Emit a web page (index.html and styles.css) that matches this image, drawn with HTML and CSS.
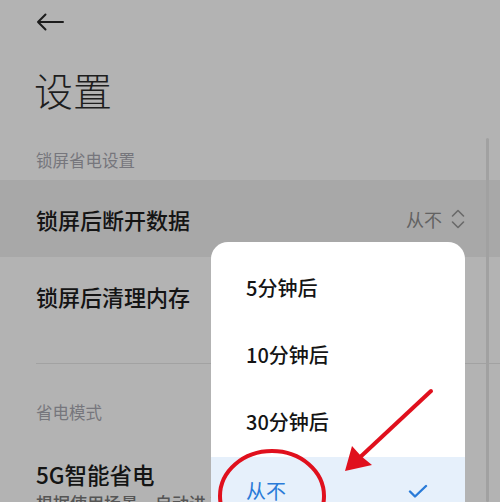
FILE: index.html
```html
<!DOCTYPE html>
<html lang="zh-CN">
<head>
<meta charset="utf-8">
<title>设置</title>
<link rel="stylesheet" href="styles.css">
</head>
<body>
<div class="screen">
  <div class="topbar">
    <svg class="back" width="28" height="18" viewBox="0 0 28 18">
      <path d="M27 9H2M9.5 1.5L2 9l7.5 7.5" fill="none" stroke="#1c1c1c" stroke-width="2" stroke-linecap="round" stroke-linejoin="round"/>
    </svg>
  </div>
  <h1 class="title">设置</h1>

  <div class="section-head first">锁屏省电设置</div>
  <div class="row active">
    <span class="row-label">锁屏后断开数据</span>
    <span class="row-value">从不
      <svg class="updown" width="14" height="22" viewBox="0 0 14 22">
        <path d="M1.5 8L7 2.5 12.5 8M1.5 14L7 19.5 12.5 14" fill="none" stroke="#6a6a6a" stroke-width="1.6" stroke-linecap="round" stroke-linejoin="round"/>
      </svg>
    </span>
  </div>
  <div class="row">
    <span class="row-label">锁屏后清理内存</span>
  </div>
  <div class="divider"></div>

  <div class="section-head">省电模式</div>
  <div class="row-two">
    <div class="row-label">5G智能省电</div>
    <div class="row-sub">根据使用场景，自动进入省电模式</div>
  </div>

  <div class="scrollbar"></div>

  <div class="popup">
    <div class="option">5分钟后</div>
    <div class="option">10分钟后</div>
    <div class="option">30分钟后</div>
    <div class="option selected">
      <span>从不</span>
      <svg class="check" width="20" height="14" viewBox="0 0 20 14">
        <path d="M2 7.5l5 5L18 2" fill="none" stroke="#2a7bd8" stroke-width="2.4" stroke-linecap="round" stroke-linejoin="round"/>
      </svg>
    </div>
  </div>

  <svg class="marks" width="500" height="502" viewBox="0 0 500 502">
    <ellipse cx="272" cy="496" rx="52" ry="45" fill="none" stroke="#e0101d" stroke-width="4"/>
    <line x1="431" y1="391" x2="356" y2="461" stroke="#e0101d" stroke-width="4" stroke-linecap="round"/>
    <polygon points="345,471 352,446 361,456 372,465" fill="#e0101d"/>
  </svg>
</div>
</body>
</html>
```

FILE: styles.css
```css
html, body {
  margin: 0;
  padding: 0;
}
body {
  background: #b3b3b3;
  font-family: "Noto Sans CJK SC", "Noto Sans", sans-serif;
  color: #141414;
}
.screen {
  position: relative;
  width: 500px;
  height: 502px;
  overflow: hidden;
  background: #b3b3b3;
}
.topbar {
  height: 44px;
  padding-left: 36px;
  display: flex;
  align-items: center;
}
.back {
  display: block;
}
.title {
  margin: 20px 0 0 34px;
  height: 50px;
  line-height: 50px;
  font-size: 39px;
  font-weight: 300;
  color: #1e1e1e;
}
.section-head {
  margin: 0 0 0 36px;
  height: 28px;
  line-height: 28px;
  font-size: 16.5px;
  color: #76767c;
}
.section-head.first {
  margin-top: 32px;
  margin-bottom: 6px;
}
.row {
  height: 77px;
  display: flex;
  align-items: center;
  justify-content: space-between;
  padding: 0 35px 0 36px;
}
.row.active {
  background: #a8a8a8;
}
.row-label {
  font-size: 22px;
  line-height: 30px;
  font-weight: 500;
  color: #141414;
}
.row-value {
  display: flex;
  align-items: center;
  gap: 9px;
  font-size: 18px;
  color: #626262;
}
.divider {
  height: 1px;
  background: #a2a2a2;
  margin: 29px 0 0 36px;
}
.section-head + .row-two {
  margin-top: 33px;
}
.divider + .section-head {
  margin-top: 34px;
}
.row-two {
  padding-left: 36px;
}
.row-two .row-label {
  height: 30px;
  font-size: 22.5px;
}
.row-sub {
  margin-top: 2px;
  font-size: 17px;
  line-height: 24px;
  font-weight: 500;
  color: #555555;
  white-space: nowrap;
}
.scrollbar {
  position: absolute;
  left: 486px;
  top: 138px;
  bottom: 0;
  width: 3px;
  border-radius: 2px;
  background: #a1a1a1;
}
.popup {
  position: absolute;
  left: 211px;
  top: 242px;
  width: 254px;
  height: 320px;
  padding-top: 12px;
  box-sizing: border-box;
  background: #ffffff;
  border-radius: 17px;
  overflow: hidden;
}
.option {
  height: 67px;
  display: flex;
  align-items: center;
  justify-content: space-between;
  padding: 0 37px 0 35px;
  font-size: 20px;
  font-weight: 500;
  color: #141414;
}
.option.selected {
  margin-top: 2px;
  background: #e6f0fb;
  color: #2a7bd8;
  font-weight: 400;
}
.check {
  display: block;
}
.marks {
  position: absolute;
  left: 0;
  top: 0;
  pointer-events: none;
}
```
